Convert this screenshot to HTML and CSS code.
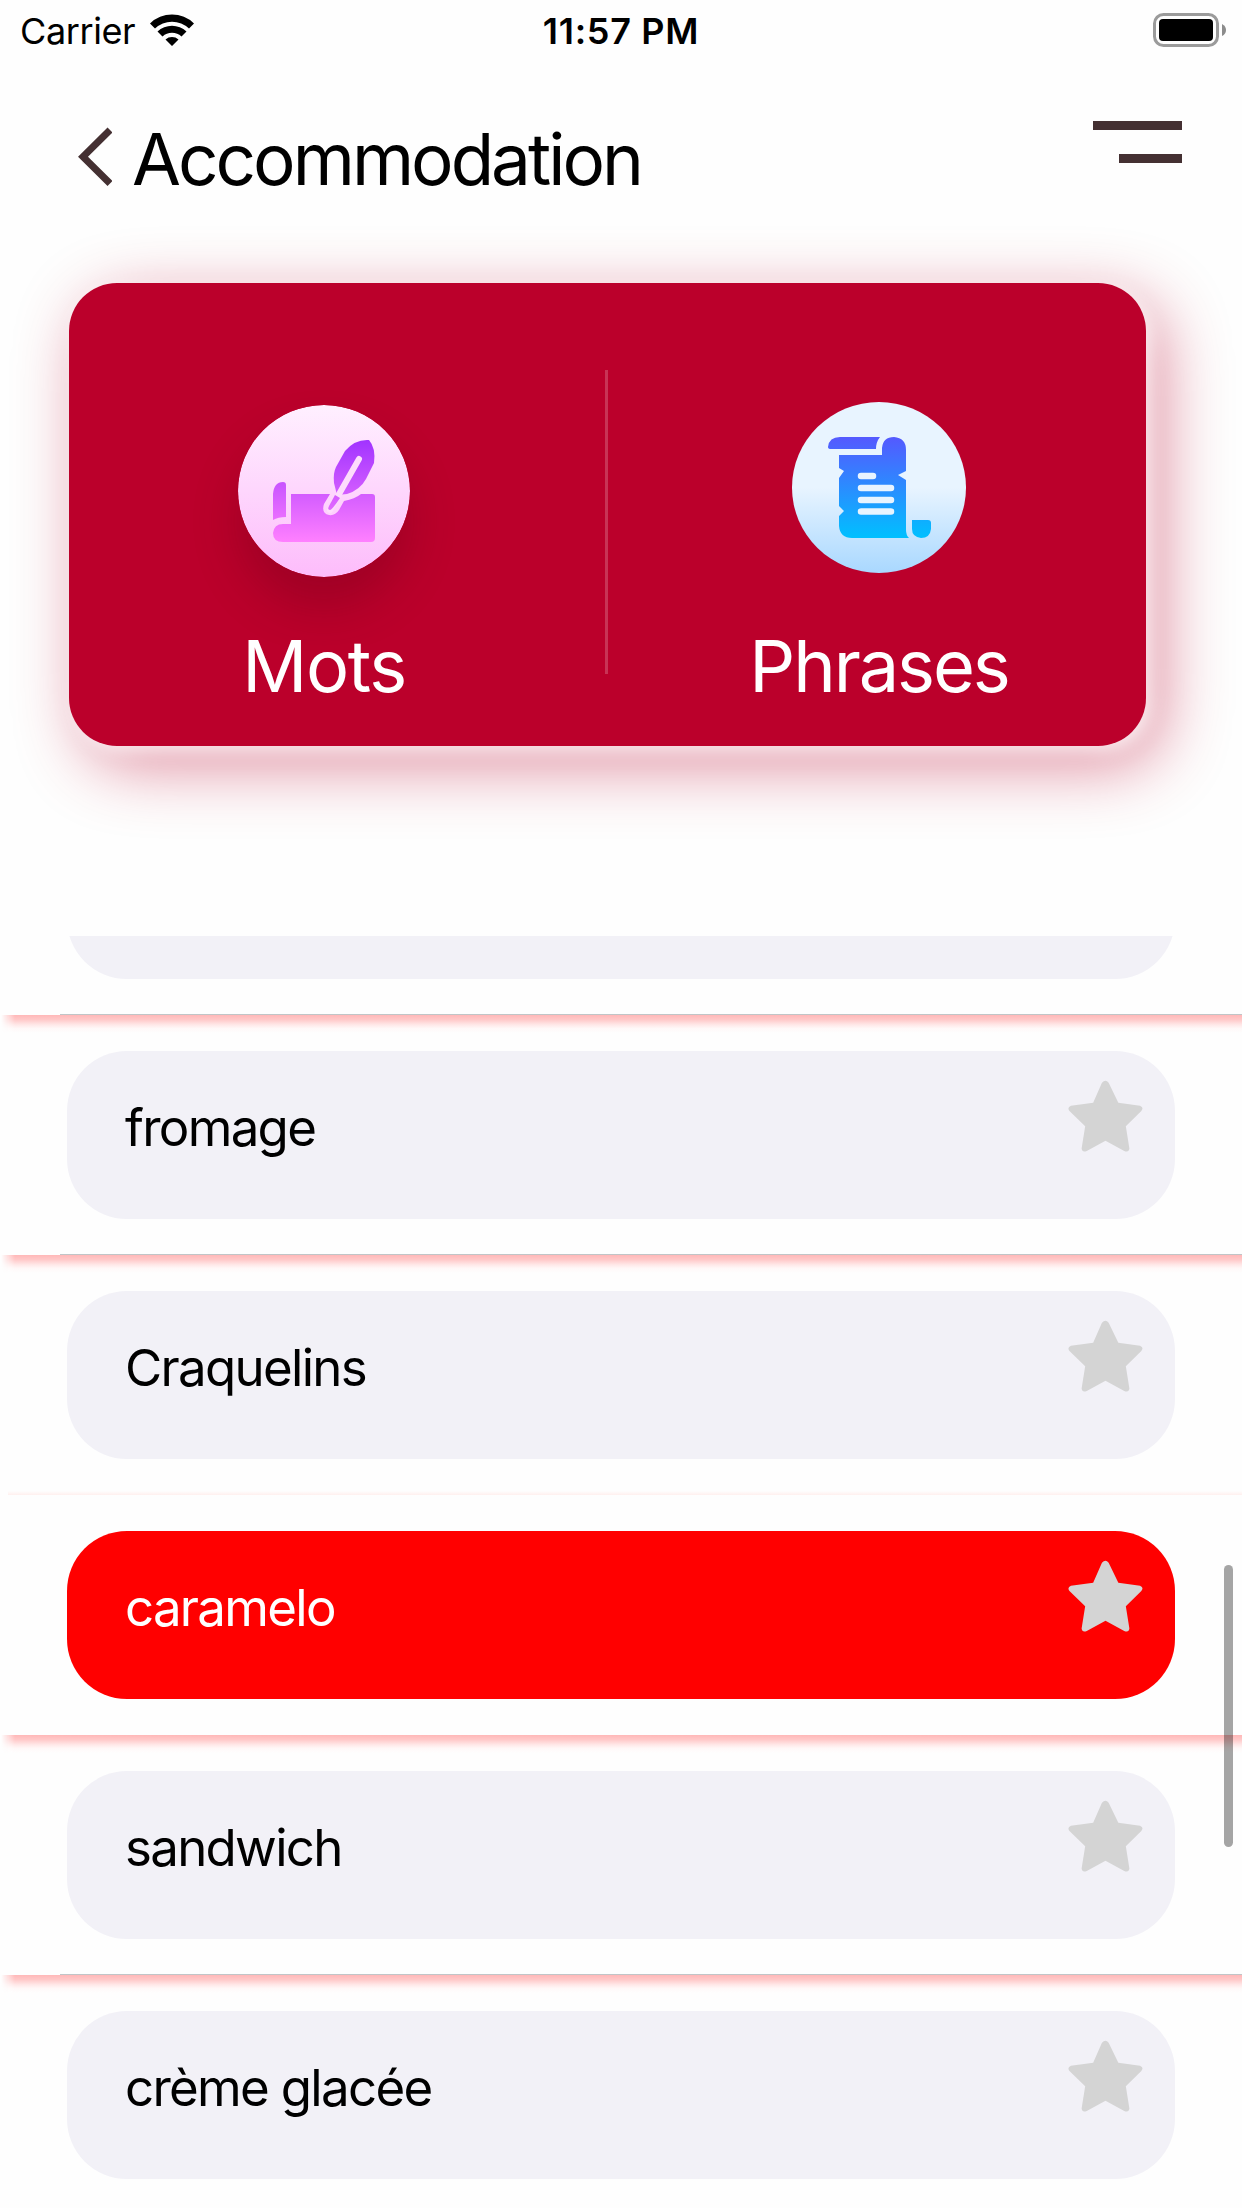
FILE: index.html
```html
<!DOCTYPE html>
<html lang="fr">
<head>
<meta charset="utf-8">
<title>Accommodation</title>
<link rel="stylesheet" href="styles.css">
</head>
<body>
<svg class="defs" aria-hidden="true">
  <defs>
    <linearGradient id="pink" x1="0" y1="34" x2="0" y2="137" gradientUnits="userSpaceOnUse"><stop offset="0" stop-color="#a033ff"/><stop offset="1" stop-color="#ff80ff"/></linearGradient>
    <linearGradient id="blue" x1="0" y1="34" x2="0" y2="136" gradientUnits="userSpaceOnUse"><stop offset="0" stop-color="#5558ff"/><stop offset="1" stop-color="#00c0ff"/></linearGradient>
    <symbol id="star" viewBox="0 0 76 72"><path d="M34.4 2.2Q38-1.800 41.200 2.200L51 22.500 73 25.500Q77.200 27.200 74.300 31L58.600 46.300 62.200 69Q61.700 73.300 57 71.500L38 61 19 71.500Q14.300 73.300 13.800 69L17.400 46.300 1.500 31Q-1.200 27.200 3 25.500L25.500 22.500Z"/></symbol>
  </defs>
</svg>
<div class="screen">
  <header class="status">
    <div class="carrier"><span class="carrier-name">Carrier</span>
      <svg class="wifi" viewBox="0 0 46 34"><path d="M1 10.500A31.500 31.500 0 0 1 45 10.500L40 15.500A24.500 24.500 0 0 0 6 15.500Z M8.500 18.500A21 21 0 0 1 37.500 18.500L32.500 23.500A14 14 0 0 0 13.500 23.500Z M16.500 26.500A10 10 0 0 1 29.500 26.500L23 33Z"/></svg>
    </div>
    <span class="time">11:57 PM</span>
    <svg class="battery" viewBox="0 0 74 34"><rect x="1.500" y="1.500" width="63" height="31" rx="9" fill="none" stroke="#9b9b9b" stroke-width="3"/><rect x="6" y="6" width="54" height="22" rx="4"/><path d="M69 11Q73 13 73 17T69 23Z" fill="#8c8c8c"/></svg>
  </header>
  <nav class="titlebar">
    <svg class="back" viewBox="0 0 36 60"><path d="M34 3 7 29.700 34 56.500" fill="none" stroke="#443032" stroke-width="7"/></svg>
    <h1>Accommodation</h1>
    <div class="menu"><i></i><i class="short"></i></div>
  </nav>
  <section class="card">
    <div class="choice mots">
      <svg class="badge shaded" viewBox="0 0 172 172"><defs><linearGradient id="pb" x2="0" y2="1"><stop offset="0" stop-color="#fff0ff"/><stop offset="1" stop-color="#fdbcfb"/></linearGradient></defs><circle cx="86" cy="86" r="86" fill="url(#pb)"/><g fill="url(#pink)"><path d="M35 89Q36 77 45 77Q48 77 48 80V112Q40 112 35 115Z"/><path d="M53 89H92L86 99Q83 108 91 110Q97 111 101 105L106 96Q117 94 123 89H134Q137 89 137 92V133Q137 137 133 137H45Q35 137 35 128Q36 119 45 119H53Z"/><path d="M99 90 96 78Q95 68 98 62L107 46Q117 34 131 35Q138 43 136 58L128 74Q122 85 109 89Z"/></g><path d="M121 54 92 105" fill="none" stroke="#fddcfc" stroke-width="6" stroke-linecap="round"/><path d="M97 90 91 101Q89 105 92 105Q94 105 102 93" fill="url(#pink)"/></svg>
      <span>Mots</span>
    </div>
    <div class="rule"></div>
    <div class="choice phrases">
      <svg class="badge" viewBox="0 0 174 172"><defs><linearGradient id="bb" x2="0" y2="1"><stop offset=".5" stop-color="#e8f4ff"/><stop offset="1" stop-color="#a9d8ff"/></linearGradient></defs><ellipse cx="87" cy="85.500" rx="87" ry="85.500" fill="url(#bb)"/><g fill="url(#blue)"><path d="M36 45Q37 35 48 35H88Q84 40 84 47H39Q36 47 36 45Z"/><path d="M47 53H90V46Q91 35 102 35Q114 36 114 48V69L106 73 114 78V128Q114 133 117 136H60Q48 136 47 124V114L52 109 47 104V76L52 69 47 66Z"/><path d="M120 118H136Q139 118 139 121V127Q138 136 129 136Q120 135 120 127Z"/></g><path d="M69 74H81M69 86H99M69 98H99M69 109.500H99" stroke="#e8f4ff" stroke-width="6.500" stroke-linecap="round"/></svg>
      <span>Phrases</span>
    </div>
  </section>
  <main class="list">
    <div class="row partial"><div class="pill"></div></div>
    <div class="row"><div class="pill"><span>fromage</span><svg><use href="#star"/></svg></div></div>
    <div class="row before"><div class="pill"><span>Craquelins</span><svg><use href="#star"/></svg></div></div>
    <div class="row selected"><div class="pill"><span>caramelo</span><svg><use href="#star"/></svg></div></div>
    <div class="row"><div class="pill"><span>sandwich</span><svg><use href="#star"/></svg></div></div>
    <div class="row"><div class="pill"><span>crème glacée</span><svg><use href="#star"/></svg></div></div>
    <div class="scrollbar"></div>
  </main>
</div>
</body>
</html>
```
FILE: styles.css
```css
* { box-sizing: border-box; }
body { margin: 0; background: #fefefe; color: #000; font-family: Inter, "Liberation Sans", sans-serif; }
svg { display: block; flex: none; }
.defs { position: absolute; width: 0; height: 0; }
.screen { width: 1242px; height: 2208px; overflow: hidden; display: flex; flex-direction: column; background: #fefefe; }
.status { height: 60px; display: grid; grid-template-columns: 1fr auto 1fr; padding: 0 15px 0 20px; font-size: 36px; line-height: 62px; }
.carrier { display: flex; gap: 13px; }
.carrier-name { width: 116px; letter-spacing: -0.4px; }
.wifi { width: 46px; height: 34px; margin-top: 13px; }
.time { font-weight: 600; letter-spacing: 0.7px; margin: 0 2px 0 -3px; }
.battery { width: 74px; height: 34px; margin-top: 13px; justify-self: end; }
.titlebar { height: 223px; display: flex; padding: 60px 60px 0 76px; }
.back { width: 36px; height: 60px; margin-top: 7px; }
h1 { margin: 0 0 0 20px; flex: 1; font-size: 71px; line-height: 78px; font-weight: 400; letter-spacing: -3px; white-space: nowrap; }
.menu { display: flex; flex-direction: column; align-items: flex-end; gap: 24px; margin-top: 1px; }
.menu i { width: 89px; height: 9px; background: #443032; }
.menu .short { width: 63px; }
.card { height: 463px; flex: none; margin: 0 96px 0 69px; border-radius: 48px; background: #bb002b; display: grid; grid-template-columns: 536px 3px 1fr; color: #fff; box-shadow: 5px 5px 18px rgba(255, 255, 255, .8), 15px 18px 66px 2px rgba(187, 0, 43, .45); }
.choice { display: flex; flex-direction: column; align-items: center; font-size: 72px; line-height: 84px; }
.badge { width: 172px; height: 172px; }
.mots { padding: 122px 26px 0 0; }
.mots span { margin-top: 47px; letter-spacing: -1.4px; }
.phrases { padding: 119px 0 0 4px; }
.phrases .badge { width: 174px; }
.phrases span { margin-top: 50px; letter-spacing: -2.1px; }
.shaded { border-radius: 50%; box-shadow: 0 30px 45px rgba(80, 0, 20, .25); }
.rule { margin-top: 87px; height: 304px; background: rgba(255, 255, 255, .2); }
.list { position: relative; margin-top: 190px; height: 1272px; overflow: hidden; }
.row { position: relative; height: 240px; padding: 36px 67px; }
.row::before { content: ""; position: absolute; inset: 0 0 auto; height: 18px; }
.row:not(.partial):not(.selected)::before { background: linear-gradient(#ffb8b8, #ffc8c8 25%, #ffe8e8 54%, #fff8f8 74%, #fefefe); mask-image: linear-gradient(90deg, transparent 1px, #000 15px); }
.row::after { content: ""; position: absolute; left: 60px; right: 0; bottom: 0; height: 1px; background: #c0c5c7; }
.partial { height: 79px; padding: 0 67px; overflow: hidden; }
.partial .pill { margin-top: -125px; }
.before::after { left: 8px; height: 4px; background: linear-gradient(#fefefe, #fff0ee); }
.selected::after { display: none; }
.pill { height: 168px; border-radius: 60px; background: #f2f1f7; display: flex; justify-content: space-between; padding: 29px 32px 0 58px; font-size: 51px; line-height: 96px; letter-spacing: -1.7px; }
.pill svg { width: 75px; height: 72px; fill: #d4d4d4; }
.selected .pill { background: #f00; color: #fff; }
.scrollbar { position: absolute; left: 1224px; top: 629px; width: 9px; height: 282px; border-radius: 5px; background: rgba(0, 0, 0, .35); }
```
